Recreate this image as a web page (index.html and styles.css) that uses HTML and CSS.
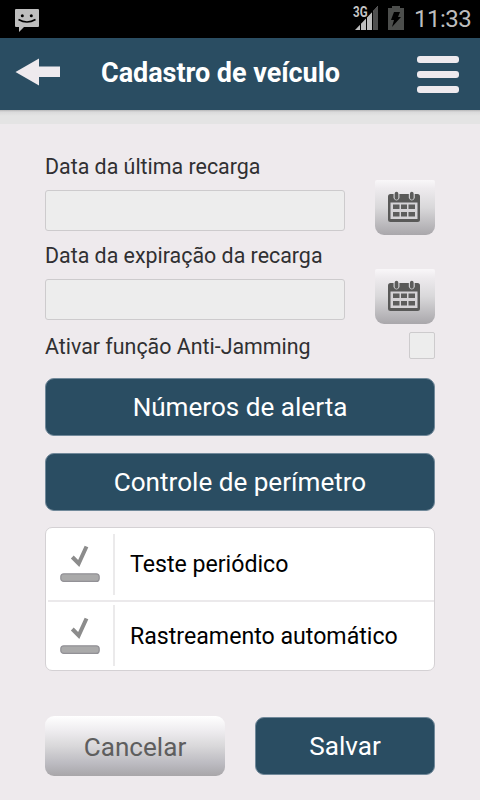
FILE: index.html
```html
<!DOCTYPE html>
<html lang="pt-BR">
<head>
<meta charset="utf-8">
<title>Cadastro de veículo</title>
<link rel="stylesheet" href="styles.css">
</head>
<body>
<svg class="defs" width="0" height="0" aria-hidden="true">
  <defs>
    <symbol id="calendar" viewBox="0 0 34 34">
      <rect x="1" y="4" width="32" height="28" rx="2.500" fill="#595958"/>
      <path d="M3.500 12.500h27v16.500h-27z" fill="#d5d3d6"/>
      <path d="M6 14.500h6.500v4.500H6zm8 0h6v4.500h-6zm7.500 0H28v4.500h-6.500zM6 22h6.500v4.500H6zm8 0h6v4.500h-6zm7.500 0H28v4.500h-6.500z" fill="#5d5d5c"/>
      <path d="M6.500 4v4q3 5 6 0V4zM21.800 4v4q3 5 6 0V4z" fill="#cfcfd1"/>
      <path d="M9.500 3.500v4.500M24.800 3.500v4.500" stroke="#5b5b5a" stroke-width="3.600" stroke-linecap="round"/>
    </symbol>
    <symbol id="check" viewBox="0 0 40 38">
      <path d="M12.300 12L18.700 18.500L26.500 1.500" fill="none" stroke="#8c8c8c" stroke-width="4"/>
      <rect x=".8" y="28.800" width="38.400" height="7.600" rx="3" fill="#aaa" stroke="#929196" stroke-width="1.200"/>
    </symbol>
  </defs>
</svg>
<div class="status">
  <svg class="sms" width="24" height="24" viewBox="0 0 24 24"><path d="M1 0h22q1 0 1 1v16q0 1-1 1H9l-5 5v-5H1q-1 0-1-1V1q0-1 1-1z" fill="#bebebe"/><circle cx="7.300" cy="6.700" r="1.500"/><circle cx="16.300" cy="6.700" r="1.500"/><path d="M3.500 10.500q8.500 5 17 0" fill="none" stroke="#000" stroke-width="1.500"/></svg>
  <svg class="signal" width="30" height="30" viewBox="-4 -6 30 30"><path d="M2 24L25 0V24z" fill="#bebebe"/><path d="M20 5.200L25 0V24h-5z" fill="#4f4f4f"/><path d="M7.500 12v12M13.500 7v17M19.500 3v21" stroke="#000"/><text class="net" x="0" y="11" textLength="14.500" lengthAdjust="spacingAndGlyphs">3G</text></svg>
  <svg class="battery" width="16" height="24" viewBox="0 0 16 24"><path d="M4 0h8v2h4v22H0V2h4z" fill="#4c4e4c"/><path d="M6 6h6l-2 5h3L4 21l2-7H3z" fill="#000"/></svg>
  <span class="time">11:33</span>
</div>
<header class="header">
  <svg width="46" height="28" viewBox="0 0 46 28"><path d="M.5 14L24 .5V8.500H45V19H24V27.500z" fill="#eeeaee"/></svg>
  <h1 class="title">Cadastro de veículo</h1>
  <div class="menu"><i></i><i></i><i></i></div>
</header>
<div class="strip"></div>
<main class="form">
  <div class="field">
    <div><label class="label">Data da última recarga</label><div class="input"></div></div>
    <div class="cal"><svg width="34" height="34"><use href="#calendar"/></svg></div>
  </div>
  <div class="field">
    <div><label class="label">Data da expiração da recarga</label><div class="input"></div></div>
    <div class="cal"><svg width="34" height="34"><use href="#calendar"/></svg></div>
  </div>
  <div class="option"><span class="label">Ativar função Anti-Jamming</span><span class="checkbox"></span></div>
  <div class="button wide">Números de alerta</div>
  <div class="button wide">Controle de perímetro</div>
  <div class="list">
    <div class="item"><div class="mark"><svg width="40" height="38"><use href="#check"/></svg></div><span>Teste periódico</span></div>
    <div class="item"><div class="mark"><svg width="40" height="38"><use href="#check"/></svg></div><span>Rastreamento automático</span></div>
  </div>
  <div class="actions">
    <div class="button cancel">Cancelar</div>
    <div class="button save">Salvar</div>
  </div>
</main>
</body>
</html>
```
FILE: styles.css
```css
* { box-sizing: border-box; }
body { margin: 0; width: 480px; height: 800px; overflow: hidden; background: #eeeaed; font-family: Roboto, sans-serif; color: #303032; }
svg { display: block; flex: none; }
.defs { position: absolute; }
.status { height: 38px; background: #000; display: flex; align-items: flex-start; padding: 0 9px 0 15px; }
.sms { margin-top: 9px; }
.signal { margin: 0 9px 0 auto; }
.net { font: bold 14px Roboto, sans-serif; fill: #c4c4c4; stroke: #000; stroke-width: 2px; paint-order: stroke; }
.battery { margin: 6px 10px 0 0; }
.time { font-size: 24px; letter-spacing: -.5px; line-height: 39px; color: #bebebe; white-space: nowrap; width: 57px; }
.header { height: 72px; background: #2a4d62; display: flex; align-items: center; padding: 0 21px 4px 15px; }
.title { margin: 2px 0 0 40px; font-size: 27px; letter-spacing: -.04px; line-height: 40px; color: #fff; white-space: nowrap; }
.menu { margin-left: auto; width: 42px; display: flex; flex-direction: column; gap: 8px; padding-top: 4px; }
.menu i { height: 7px; border-radius: 3px; background: #eeeaee; }
.strip { height: 14px; background: linear-gradient(#b7b7b8, #dadadb 2px, #e4e4e4 6px); }
.form { padding: 22px 45px 0; }
.field { display: flex; justify-content: space-between; height: 89px; }
.label { display: block; font-size: 21.400px; line-height: 42px; white-space: nowrap; }
.input { width: 300px; height: 41px; margin-top: 2px; border: 1px solid #cdcbcd; border-radius: 3px; background: #ededed; }
.cal { width: 60px; height: 55px; margin-top: 34px; border-radius: 2px 2px 9px 9px; background: linear-gradient(#f9f7f9, #eeebee 15%, #d9d8da 50%, #a9a7ab); display: flex; justify-content: center; padding: 10px 2px 0 0; }
.option { height: 54px; display: flex; justify-content: space-between; align-items: flex-start; }
.option .label { line-height: 45px; }
.checkbox { width: 26px; height: 27px; margin-top: 8px; border: 1px solid #cdcbcd; border-radius: 2px; background: #ededed; }
.button { height: 58px; border: 1px solid #71899a; border-radius: 9px; background: #2a4d62; color: #fff; font-size: 26.100px; line-height: 57px; text-align: center; white-space: nowrap; }
.wide { margin-bottom: 17px; }
.list { height: 144px; margin-top: -1px; border: 1px solid #d4d1d4; border-radius: 7px; background: #fff; overflow: hidden; color: #000; font-size: 23.150px; }
.item { height: 72px; display: flex; line-height: 73px; white-space: nowrap; }
.item + .item { border-top: 2px solid #ebe9eb; margin-left: 2px; line-height: 69px; }
.mark { width: 69px; height: 61px; margin: 6px 15px 0 0; border-right: 2px solid #ebeaeb; padding: 11px 0 0 14px; }
.item + .item .mark { width: 67px; margin-top: 3px; padding: 12px 0 0 12px; }
.actions { display: flex; justify-content: space-between; margin-top: 45px; }
.cancel { width: 180px; height: 60px; border: 0; background: linear-gradient(#fff, #eeecef 25%, #d9d8da 50%, #bbbac0 80%, #a8a6a9); color: #5e5e5e; line-height: 62px; }
.save { width: 180px; margin-top: 1px; }
```
